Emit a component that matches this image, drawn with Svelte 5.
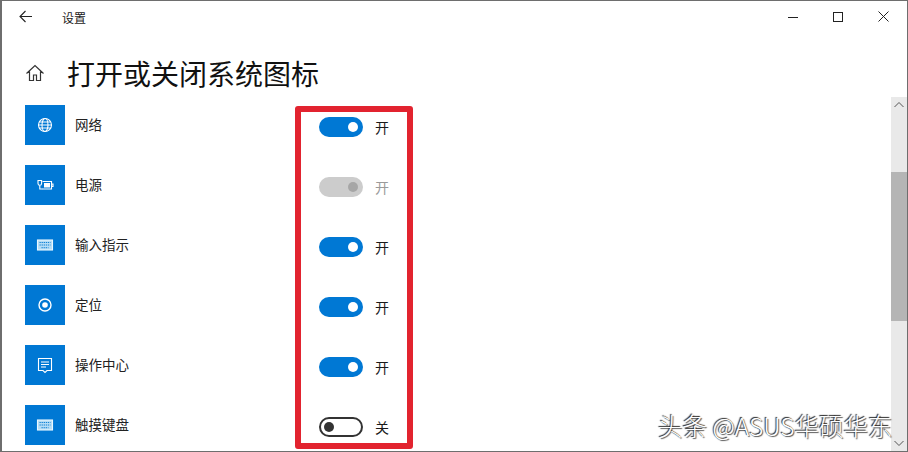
<script lang="ts">
	type Row = { name: string; icon: string; state: 'on' | 'off' | 'disabled' };

	const rows: Row[] = [
		{ name: '网络', icon: 'globe', state: 'on' },
		{ name: '电源', icon: 'power', state: 'disabled' },
		{ name: '输入指示', icon: 'keyboard', state: 'on' },
		{ name: '定位', icon: 'location', state: 'on' },
		{ name: '操作中心', icon: 'action', state: 'on' },
		{ name: '触摸键盘', icon: 'keyboard', state: 'off' }
	];
</script>

<svelte:head><title>设置</title></svelte:head>

{#snippet rowIcon(name: string)}
	<svg width="20" height="20" viewBox="0 0 20 20" fill="none" stroke="#fff" stroke-width="1.1">
		{#if name === 'globe'}
			<circle cx="10" cy="10" r="6.5" />
			<ellipse cx="10" cy="10" rx="3" ry="6.5" />
			<path d="M3.5 10h13M4.4 7h11.2M4.4 13h11.2" />
		{:else if name === 'power'}
			<path d="M7.5 6.5h9V14h-9M16.5 9H18v2.500h-1.500" />
			<rect x="9" y="8" width="6" height="4.5" fill="#fff" stroke="none" />
			<path d="M3 5.500v3a1.800 1.800 0 0 0 1.800 1.800h0a1.800 1.800 0 0 0 1.800-1.800v-3H3zM4.800 10.500V14h3" />
		{:else if name === 'keyboard'}
			<rect x="2.5" y="5" width="15" height="10" fill="#b5dcf5" stroke="#eaf8ff" />
			<path d="M4.500 7.500h11M4.500 10h11M6.500 12.700h7" stroke="#0078d4" stroke-width="0.9" stroke-dasharray="1.300 0.800" />
		{:else if name === 'location'}
			<circle cx="10" cy="10" r="6" stroke-width="1.4" />
			<circle cx="10" cy="10" r="2.8" fill="#fff" stroke="none" />
		{:else}
			<path d="M3.5 3.500h13v12H12l-2 2-2-2H3.500z" />
			<path d="M6 7h8M6 9.500h8M6 12h5" />
		{/if}
	</svg>
{/snippet}

<div class="window">
	<header class="titlebar">
		<div class="title-left">
			<svg class="back" width="13" height="13" viewBox="0 0 13 13" fill="none" stroke="#222" stroke-width="1.1">
				<path d="M13 6.500H1M6.500 1 1 6.500 6.500 12" />
			</svg>
			<span>设置</span>
		</div>
		<div class="controls">
			<svg width="10" height="10" viewBox="0 0 10 10" stroke="#222" fill="none"><path d="M0 5.500h10" /></svg>
			<svg width="10" height="10" viewBox="0 0 10 10" stroke="#222" fill="none"><rect x="0.5" y="0.5" width="9" height="9" /></svg>
			<svg width="11" height="11" viewBox="0 0 11 11" stroke="#222" fill="none"><path d="M0.500 0.500l10 10M10.500 0.500l-10 10" /></svg>
		</div>
	</header>

	<div class="heading">
		<svg width="20" height="20" viewBox="0 0 20 20" fill="none" stroke="#333" stroke-width="1.2">
			<path d="M1.500 10.500 10 2.500l8.500 8M4.500 8.500v9h4V12h3v5.500h4v-9" />
		</svg>
		<h1>打开或关闭系统图标</h1>
	</div>

	<div class="content">
		<ul class="list">
			{#each rows as r (r.name)}
				<li class="row">
					<div class="tile">{@render rowIcon(r.icon)}</div>
					<span class="name">{r.name}</span>
					<div class="switch {r.state}">
						<span class="track"><span class="knob"></span></span>
						<span class="label">{r.state === 'off' ? '关' : '开'}</span>
					</div>
				</li>
			{/each}
		</ul>
		<div class="scrollbar">
			<svg class="arrow" width="16" height="16" viewBox="0 0 16 16" fill="none" stroke="#555"><path d="M3.500 10 8 5.500l4.500 4.500" /></svg>
			<div class="gap-a"></div>
			<div class="thumb"></div>
			<div class="gap-b"></div>
			<svg class="arrow" width="16" height="16" viewBox="0 0 16 16" fill="none" stroke="#555"><path d="M3.500 6 8 10.500 12.500 6" /></svg>
		</div>
	</div>

	<div class="redbox"></div>
	<div class="mark">头条 @ASUS华硕华东</div>
</div>

<style>
	:global(body) {
		margin: 0;
		background: #fff;
	}
	.window {
		position: relative;
		width: 908px;
		height: 452px;
		box-sizing: border-box;
		border: solid #6e6e6e;
		border-width: 1px 1px 1px 2px;
		overflow: hidden;
		background: #fff;
		font-family: 'Noto Sans CJK SC', 'Liberation Sans', sans-serif;
		color: #1a1a1a;
	}
	.titlebar {
		display: flex;
		justify-content: space-between;
		align-items: center;
		height: 32px;
		font-size: 12px;
	}
	.title-left {
		display: flex;
		align-items: center;
		gap: 30px;
		padding-left: 17px;
	}
	.back {
		margin-top: -2px;
	}
	.controls {
		display: flex;
		align-items: center;
		gap: 35px;
		padding-right: 18px;
		padding-bottom: 1px;
	}
	.heading {
		display: flex;
		align-items: center;
		gap: 22px;
		padding-left: 23px;
		padding-top: 16px;
		height: 64px;
		box-sizing: border-box;
	}
	h1 {
		margin: 0;
		font-size: 28px;
		font-weight: 400;
		line-height: 40px;
		color: #111;
	}
	.content {
		display: flex;
		height: 354px;
		overflow: hidden;
	}
	.list {
		flex: 1;
		list-style: none;
		margin: 0;
		padding: 8px 0 0 23px;
	}
	.row {
		display: flex;
		height: 60px;
	}
	.tile {
		width: 40px;
		height: 40px;
		background: #0078d4;
		display: flex;
		align-items: center;
		justify-content: center;
		flex: none;
	}
	.name {
		width: 244px;
		margin-left: 10px;
		font-size: 13.5px;
		line-height: 20px;
		margin-top: 9px;
		height: 20px;
		flex: none;
		color: #222;
	}
	.switch {
		display: flex;
		align-items: center;
		gap: 12px;
		height: 20px;
		margin-top: 12px;
		font-size: 14px;
	}
	.track {
		display: flex;
		align-items: center;
		justify-content: flex-end;
		box-sizing: border-box;
		width: 44px;
		height: 20px;
		border-radius: 10px;
		padding: 0 5px;
		background: #0078d4;
	}
	.knob {
		width: 10px;
		height: 10px;
		border-radius: 50%;
		background: #fff;
	}
	.disabled .track {
		background: #cccccc;
	}
	.disabled .knob {
		background: #a6a6a6;
	}
	.disabled .label {
		color: #9a9a9a;
	}
	.off .track {
		justify-content: flex-start;
		background: #fff;
		border: 2px solid #333;
		padding: 0 3px;
	}
	.off .knob {
		background: #333;
	}
	.scrollbar {
		flex: none;
		width: 16px;
		display: flex;
		flex-direction: column;
		background: #e9e9e9;
	}
	.arrow {
		flex: none;
	}
	.gap-a {
		height: 59px;
		flex: none;
	}
	.thumb {
		height: 149px;
		flex: none;
		background: #b5b5b5;
	}
	.gap-b {
		flex: 1;
	}
	.redbox {
		position: absolute;
		left: 293px;
		top: 105px;
		width: 118px;
		height: 343px;
		box-sizing: border-box;
		border: 6px solid #e2232f;
		border-radius: 3px;
	}
	.mark {
		position: absolute;
		left: 656px;
		top: 409px;
		font-size: 24.5px;
		line-height: 32px;
		font-family: 'Noto Sans CJK SC', 'Liberation Sans', sans-serif;
		font-weight: 300;
		color: #fff;
		text-shadow: -1px -1px 1px #222, 1px 1px 1px #555;
		white-space: nowrap;
	}
</style>
